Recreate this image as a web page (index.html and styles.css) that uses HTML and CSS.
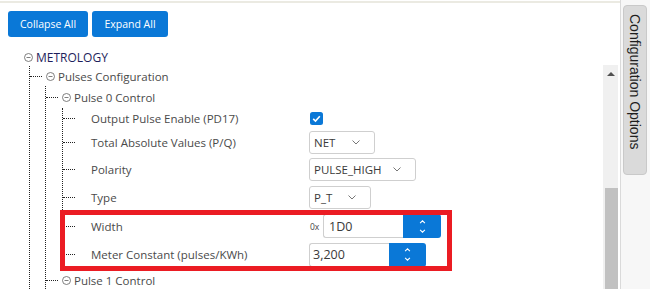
FILE: index.html
```html
<!DOCTYPE html>
<html lang="en">
<head>
    <meta charset="UTF-8">
    <meta name="viewport" content="width=device-width, initial-scale=1.0">
    <title>Metrology Configuration</title>
    <link rel="stylesheet" href="styles.css">
</head>
<body>
<div class="page">
    <div class="main">
        <div class="toolbar">
            <button class="btn btn-collapse">Collapse All</button>
            <button class="btn btn-expand">Expand All</button>
        </div>

        <div class="content">
            <div class="tree">
                <div class="row row-root">
                    <svg class="toggle" viewBox="0 0 9 9"><circle cx="4.5" cy="4.5" r="4" /><line x1="2.5" y1="4.5" x2="6.5" y2="4.5" /></svg>
                    <span class="root-label">METROLOGY</span>
                </div>
                <ul class="branch level1">
                    <li>
                        <div class="row row-20">
                            <span class="link"></span>
                            <svg class="toggle" viewBox="0 0 9 9"><circle cx="4.5" cy="4.5" r="4" /><line x1="2.5" y1="4.5" x2="6.5" y2="4.5" /></svg>
                            <span class="node-label">Pulses Configuration</span>
                        </div>
                        <ul class="branch level2">
                            <li>
                                <div class="row row-22">
                                    <span class="link"></span>
                                    <svg class="toggle" viewBox="0 0 9 9"><circle cx="4.5" cy="4.5" r="4" /><line x1="2.5" y1="4.5" x2="6.5" y2="4.5" /></svg>
                                    <span class="node-label">Pulse 0 Control</span>
                                </div>
                                <ul class="branch leaves">
                                    <li class="row row-21">
                                        <span class="link"></span>
                                        <span class="label">Output Pulse Enable (PD17)</span>
                                        <svg class="check" viewBox="0 0 13 13"><rect width="13" height="13" rx="2.5" /><path d="M3.2 6.8 L5.5 9 L9.8 4.2" /></svg>
                                    </li>
                                    <li class="row row-26">
                                        <span class="link"></span>
                                        <span class="label">Total Absolute Values (P/Q)</span>
                                        <div class="select select-net"><span>NET</span><svg class="chev" viewBox="0 0 8 5"><path d="M0.5 0.5 L4 4 L7.5 0.5" /></svg></div>
                                    </li>
                                    <li class="row row-28">
                                        <span class="link"></span>
                                        <span class="label">Polarity</span>
                                        <div class="select select-polarity"><span>PULSE_HIGH</span><svg class="chev" viewBox="0 0 8 5"><path d="M0.5 0.5 L4 4 L7.5 0.5" /></svg></div>
                                    </li>
                                    <li class="row row-28">
                                        <span class="link"></span>
                                        <span class="label">Type</span>
                                        <div class="select select-type"><span>P_T</span><svg class="chev" viewBox="0 0 8 5"><path d="M0.5 0.5 L4 4 L7.5 0.5" /></svg></div>
                                    </li>
                                    <li class="row row-30">
                                        <span class="link"></span>
                                        <span class="label">Width</span>
                                        <div class="spin">
                                            <span class="prefix">0x</span>
                                            <span class="spin-input spin-hex">1D0</span>
                                            <span class="spin-btn spin-btn-wide">
                                                <svg viewBox="0 0 8 5"><path d="M1 4 L4 1 L7 4" /></svg>
                                                <svg viewBox="0 0 8 5"><path d="M1 1 L4 4 L7 1" /></svg>
                                            </span>
                                        </div>
                                    </li>
                                    <li class="row row-27 last">
                                        <span class="link"></span>
                                        <span class="label">Meter Constant (pulses/KWh)</span>
                                        <div class="spin">
                                            <span class="spin-input spin-num">3,200</span>
                                            <span class="spin-btn">
                                                <svg viewBox="0 0 8 5"><path d="M1 4 L4 1 L7 4" /></svg>
                                                <svg viewBox="0 0 8 5"><path d="M1 1 L4 4 L7 1" /></svg>
                                            </span>
                                        </div>
                                    </li>
                                </ul>
                            </li>
                            <li>
                                <div class="row row-24">
                                    <span class="link"></span>
                                    <svg class="toggle" viewBox="0 0 9 9"><circle cx="4.5" cy="4.5" r="4" /><line x1="2.5" y1="4.5" x2="6.5" y2="4.5" /></svg>
                                    <span class="node-label">Pulse 1 Control</span>
                                </div>
                                <ul class="branch leaves">
                                    <li class="row row-21"><span class="link"></span></li>
                                </ul>
                            </li>
                        </ul>
                    </li>
                </ul>
            </div>

            <div class="scrollbar">
                <div class="scroll-up"><span class="arrow"></span></div>
                <div class="thumb"></div>
            </div>
        </div>

        <div class="highlight"></div>
    </div>

    <div class="side">
        <div class="tab">Configuration Options</div>
    </div>
</div>
</body>
</html>
```

FILE: styles.css
```css
body {
    margin: 0;
    font-family: "Open Sans", "Noto Sans", sans-serif;
    background: #fff;
    color: #3a3a3a;
}

.page {
    display: flex;
    width: 650px;
    height: 289px;
    overflow: hidden;
}

.main {
    position: relative;
    width: 620px;
    display: flex;
    flex-direction: column;
    border-top: 2px solid #ebeae2;
    margin-top: 1px;
}

/* toolbar */
.toolbar {
    display: flex;
    gap: 4px;
    padding: 8px 0 0 8px;
}
.btn {
    height: 26px;
    padding: 0;
    border: none;
    border-radius: 3px;
    background: #0a78d7;
    color: #fff;
    font-family: "Open Sans", sans-serif;
    font-size: 10.5px;
    cursor: pointer;
}
.btn-collapse { width: 80px; }
.btn-expand { width: 76px; }

/* tree + scrollbar */
.content {
    display: flex;
    margin-top: 11px;
    height: 241px;
}
.tree {
    flex: 1;
    font-size: 11.5px;
}
.tree ul {
    list-style: none;
    margin: 0;
    padding: 0;
}
.row {
    display: flex;
    align-items: center;
}
.row-root { height: 18px; padding-left: 24px; }
.row-20 { height: 20px; }
.row-21 { height: 21px; }
.row-22 { height: 22px; }
.row-24 { height: 24px; }
.row-26 { height: 26px; }
.row-27 { height: 27px; }
.row-28 { height: 28px; }
.row-30 { height: 30px; }

.tree .branch { border-left: 1px dotted #222; }
.tree .level1 { margin-left: 29px; }
.tree .level2 { margin-left: 15px; }
.tree .leaves { margin-left: 16px; }

/* last child: hide the trunk below its connector */
.tree .last { position: relative; }
.tree .last::after {
    content: "";
    position: absolute;
    left: -1px;
    top: 15px;
    bottom: 0;
    width: 1px;
    background: #fff;
}

.link {
    width: 12px;
    border-top: 1px dotted #222;
    flex-shrink: 0;
}
.toggle {
    width: 9px;
    height: 9px;
    margin-right: 3px;
    flex-shrink: 0;
    fill: none;
    stroke: #707070;
    stroke-width: 0.9;
}
.link + .toggle { margin-left: 4px; }
.root-label {
    color: #1e1e5c;
    font-size: 12px;
}
.node-label { color: #4a4a4a; }

.label {
    width: 218px;
    margin-left: 16px;
    color: #4a4a4a;
    flex-shrink: 0;
}

/* controls */
.check {
    width: 13px;
    height: 13px;
    margin-left: 1px;
}
.check rect { fill: #0a78d7; }
.check path {
    fill: none;
    stroke: #fff;
    stroke-width: 1.6;
}

.select {
    display: flex;
    align-items: center;
    height: 23px;
    box-sizing: border-box;
    border: 1px solid #cfcfcf;
    border-radius: 3px;
    padding: 0 14px 0 4px;
    font-size: 11.5px;
    color: #3a3a3a;
}
.select .chev {
    width: 8px;
    height: 5px;
    margin-left: auto;
    fill: none;
    stroke: #777;
    stroke-width: 1;
}
.select-net { width: 66px; }
.select-polarity { width: 107px; }
.select-type { width: 62px; }

.spin {
    display: flex;
    align-items: center;
}
.prefix {
    font-size: 8.5px;
    color: #444;
    width: 13px;
    padding-left: 1px;
}
.spin-input {
    display: flex;
    align-items: center;
    width: 80px;
    height: 24px;
    box-sizing: border-box;
    border: 1px solid #cfcfcf;
    border-right: none;
    border-radius: 3px 0 0 3px;
    font-size: 12.5px;
    color: #3a3a3a;
}
.spin-hex { padding-left: 5px; }
.spin-num { padding-left: 3px; }
.spin-btn {
    display: flex;
    flex-direction: column;
    align-items: center;
    justify-content: center;
    gap: 5px;
    width: 37px;
    height: 24px;
    background: #0a78d7;
    border-radius: 0 3px 3px 0;
}
.spin-btn-wide { width: 38px; }
.spin-btn svg {
    width: 7px;
    height: 4px;
    fill: none;
    stroke: #fff;
    stroke-width: 1.3;
}

.scrollbar {
    width: 15px;
    margin: 17px 2px 0 0;
    background: #f0f0f0;
    display: flex;
    flex-direction: column;
}
.scroll-up {
    height: 17px;
    display: flex;
    justify-content: center;
    padding-top: 7px;
    box-sizing: border-box;
}
.arrow {
    width: 0;
    height: 0;
    border-left: 4px solid transparent;
    border-right: 4px solid transparent;
    border-bottom: 4px solid #505050;
}
.thumb {
    margin: 106px 0 0 2px;
    flex: 1;
    background: #c1c1c1;
}

/* annotation */
.highlight {
    position: absolute;
    left: 60px;
    top: 207px;
    width: 392px;
    height: 61px;
    box-sizing: border-box;
    border: 5px solid #eb1c23;
}

/* side panel */
.side {
    width: 30px;
    box-sizing: border-box;
    border-left: 1px solid #dadada;
    background: #f7f7f7;
    padding: 5px 0 0 2px;
}
.tab {
    width: 24px;
    height: 170px;
    box-sizing: border-box;
    padding-top: 8px;
    background: #dadada;
    border: 1px solid #c9c9c9;
    border-radius: 4px;
    writing-mode: vertical-rl;
    font-family: "Liberation Sans", Arial, sans-serif;
    font-size: 14px;
    line-height: 22px;
    color: #1e1e1e;
}
```
